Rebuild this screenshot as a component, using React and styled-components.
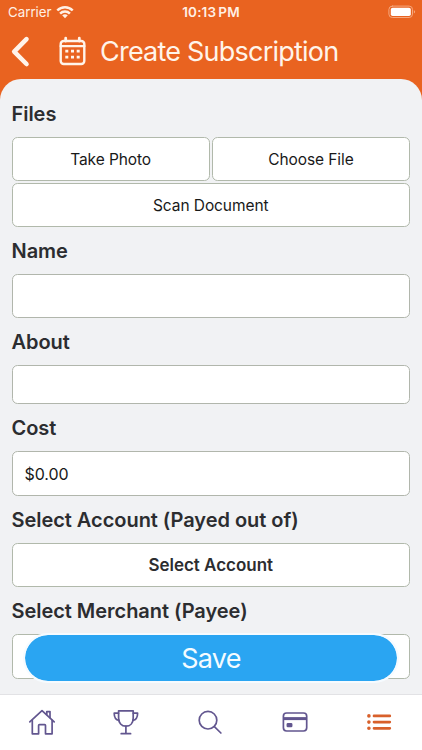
import React from "react";
import styled, { createGlobalStyle } from "styled-components";

const GlobalStyle = createGlobalStyle`
  * { box-sizing: border-box; }
  body { margin: 0; background: #e96320; font-family: Inter, "Liberation Sans", sans-serif; }
  button, input { font-family: inherit; margin: 0; }
`;

const Screen = styled.div`
  width: 422px;
  height: 750px;
  display: flex;
  flex-direction: column;
  overflow: hidden;
  background: #e96320;
`;

const StatusBar = styled.div`
  height: 24px;
  flex: none;
  display: grid;
  grid-template-columns: 1fr auto 1fr;
  align-items: center;
  padding: 0 6px 0 8px;
  color: #fff0e5;
`;

const Carrier = styled.div`
  display: flex;
  align-items: center;
  gap: 4px;
  font-size: 13.3px;
`;

const Clock = styled.div`
  font-size: 13.5px;
  font-weight: 600;
  letter-spacing: 0.15px;
  word-spacing: -1.5px;
  transform: translateX(-1px);
`;

const BatterySlot = styled.div`
  display: flex;
  justify-content: flex-end;
`;

const Header = styled.header`
  height: 55px;
  flex: none;
  display: flex;
  align-items: center;
  padding-left: 9.5px;
  color: #fff4ea;
`;

const Title = styled.h1`
  margin: 0 0 0 15.5px;
  font-size: 27px;
  font-weight: 400;
  line-height: 34px;
  letter-spacing: -0.78px;
  white-space: nowrap;
`;

const CalendarSlot = styled.div`
  display: flex;
  margin-left: 29px;
`;

const Sheet = styled.main`
  position: relative;
  flex: 1;
  min-height: 0;
  padding: 11px 12px 0 11.5px;
  background: #f1f2f4;
  border-radius: 21px 21px 0 0;
`;

const Label = styled.label`
  display: flex;
  align-items: center;
  height: 47px;
  padding-top: 1px;
  color: #2c2d30;
  font-size: 20px;
  font-weight: 600;
  letter-spacing: -0.04px;
  white-space: nowrap;
`;

const FileGrid = styled.div`
  display: grid;
  grid-template-columns: 1fr 1fr;
  gap: 2px;
`;

const FormButton = styled.button`
  display: flex;
  align-items: center;
  justify-content: center;
  width: 100%;
  height: ${(p) => p.$height || "44.5px"};
  grid-column: ${(p) => (p.$wide ? "1 / -1" : "auto")};
  padding: ${(p) => (p.$wide ? "1px 0 0" : "0")};
  border: 1px solid #b1b9ab;
  border-radius: 5.5px;
  background: #fff;
  color: ${(p) => (p.$strong ? "#2c2d30" : "#191919")};
  font-size: ${(p) => (p.$strong ? "17px" : "15.5px")};
  font-weight: ${(p) => (p.$strong ? 600 : 400)};
  letter-spacing: ${(p) => (p.$strong ? "-0.02px" : "-0.08px")};
`;

const Field = styled.input`
  display: block;
  width: 100%;
  height: ${(p) => p.$height || "44.5px"};
  padding: 1px 12px 0;
  border: 1px solid #b1b6ac;
  border-radius: 5.5px;
  background: #fff;
  color: #191919;
  font-size: 16px;
  letter-spacing: -0.05px;
  outline: none;
`;

const SaveButton = styled.button`
  position: absolute;
  left: 23px;
  right: 23px;
  bottom: 11px;
  height: 50px;
  padding: 0;
  border: 2px solid #f6fbff;
  border-radius: 25px;
  background: #2aa5f2;
  background-clip: padding-box;
  color: #f4fbff;
  font-size: 27px;
  letter-spacing: -0.7px;
`;

const TabBar = styled.nav`
  height: 56px;
  flex: none;
  display: grid;
  grid-template-columns: repeat(5, 1fr);
  border-top: 1px solid #e2e2e5;
  background: #fff;
`;

const Tab = styled.a`
  display: flex;
  justify-content: center;
  padding: 13px 1.4px 0 0;
  color: ${(p) => (p.$active ? "#d8602b" : "#62568f")};
`;

const Icon = styled.svg.attrs({ fill: "none", stroke: "currentColor", strokeLinecap: "round", strokeLinejoin: "round" })`
  display: block;
  flex: none;
  overflow: visible;
`;

const Wifi = () => (
  <Icon width="18" height="13" viewBox="0 0 18 13" strokeWidth="2.5">
    <path d="M1.3 4.5C5.5 .1 12.5 .1 16.7 4.5" strokeLinecap="butt" />
    <path d="M4.1 7.6C6.8 4.8 11.2 4.8 13.9 7.6" strokeLinecap="butt" />
    <path d="M6.2 9.3Q9 7.1 11.8 9.3L9 12.2Z" fill="currentColor" stroke="none" />
  </Icon>
);

const Battery = () => (
  <Icon width="28" height="13" viewBox="0 0 28 13">
    <rect x=".9" y=".1" width="23.6" height="11.4" rx="3.4" stroke="#f6a77d" strokeWidth="1" />
    <rect x="2.8" y="1.8" width="20" height="8.3" rx="1.8" fill="#fff" stroke="none" />
    <path d="M25.9 4Q28.4 5.8 25.9 7.6Z" fill="#f6a77d" stroke="none" />
  </Icon>
);

const Back = () => (
  <Icon width="20" height="32" viewBox="0 0 20 32" strokeWidth="4.6">
    <path d="M16.5 3.1L4.2 15.6L16.5 28" />
  </Icon>
);

const Calendar = () => (
  <Icon width="26" height="29" viewBox="0 0 26 29" strokeWidth="2.4">
    <rect x="1.7" y="4" width="23.6" height="23" rx="3" />
    <path d="M1.7 9.1H25.3" />
    <path d="M6.7 1.2V4M20.3 1.2V4" strokeWidth="2.8" />
    <path
      d="M6.3 12.7h3v2.7h-3zM12 12.7h3v2.7h-3zM17.7 12.7h3v2.7h-3zM6.3 18.7h3v2.7h-3zM12 18.7h3v2.7h-3zM17.7 18.7h3v2.7h-3z"
      fill="currentColor"
      stroke="none"
    />
  </Icon>
);

const Home = () => (
  <Icon width="28" height="28" viewBox="0 0 28 28" strokeWidth="1.7">
    <path d="M1.8 13.9L14 2.7L26.2 13.9" />
    <path d="M4.3 12.3V25.8H10.6V17.5Q10.6 16.7 11.4 16.7H16.7Q17.5 16.7 17.5 17.5V25.8H24.1V12.3" />
    <path d="M18.8 6.3V3.6H22V9.4" />
  </Icon>
);

const Trophy = () => (
  <Icon width="28" height="28" viewBox="0 0 28 28" strokeWidth="1.7">
    <path d="M6.6 2.8H21.2V10C21.2 15 18.3 18.2 13.9 18.2S6.6 15 6.6 10Z" />
    <path d="M6.5 5.2H2.2C2.2 9.2 4 11.9 7 12.4M21.3 5.2H25.6C25.6 9.2 23.8 11.9 20.8 12.4M13.9 18.2V25.6M9.2 25.7H18.6" />
  </Icon>
);

const Search = () => (
  <Icon width="28" height="28" viewBox="0 0 28 28" strokeWidth="1.7">
    <circle cx="12" cy="12.2" r="8.8" />
    <path d="M18.4 18.6L24.9 25" />
  </Icon>
);

const Card = () => (
  <Icon width="28" height="28" viewBox="0 0 28 28" strokeWidth="1.7">
    <rect x="2.4" y="5" width="23.3" height="18" rx="3.2" />
    <path d="M2.4 10.6H25.7" strokeWidth="3" strokeLinecap="butt" />
    <rect x="6.4" y="15.8" width="4.2" height="2.6" rx=".5" fill="currentColor" />
  </Icon>
);

const List = () => (
  <Icon width="28" height="28" viewBox="0 0 28 28" strokeWidth="2.7">
    <path d="M9 7.9H24.8M9 14.1H24.8M9 20.3H24.8" />
    <path d="M3.9 7.9h.01M3.9 14.1h.01M3.9 20.3h.01" strokeWidth="3.6" />
  </Icon>
);

const tabs = [
  { name: "Home", Glyph: Home },
  { name: "Goals", Glyph: Trophy },
  { name: "Search", Glyph: Search },
  { name: "Cards", Glyph: Card },
  { name: "Menu", Glyph: List, active: true },
];

export default function App() {
  return (
    <Screen>
      <GlobalStyle />
      <StatusBar>
        <Carrier>Carrier <Wifi /></Carrier>
        <Clock>10:13 PM</Clock>
        <BatterySlot><Battery /></BatterySlot>
      </StatusBar>
      <Header>
        <Back />
        <CalendarSlot><Calendar /></CalendarSlot>
        <Title>Create Subscription</Title>
      </Header>
      <Sheet>
        <Label as="div">Files</Label>
        <FileGrid>
          <FormButton $height="44px">Take Photo</FormButton>
          <FormButton $height="44px">Choose File</FormButton>
          <FormButton $height="43.5px" $wide>Scan Document</FormButton>
        </FileGrid>
        <Label htmlFor="name">Name</Label>
        <Field id="name" />
        <Label htmlFor="about">About</Label>
        <Field id="about" $height="39px" />
        <Label htmlFor="cost">Cost</Label>
        <Field id="cost" defaultValue="$0.00" />
        <Label as="div">Select Account (Payed out of)</Label>
        <FormButton $strong>Select Account</FormButton>
        <Label as="div">Select Merchant (Payee)</Label>
        <FormButton />
        <SaveButton>Save</SaveButton>
      </Sheet>
      <TabBar>
        {tabs.map(({ name, Glyph, active }) => (
          <Tab key={name} $active={active}><Glyph /></Tab>
        ))}
      </TabBar>
    </Screen>
  );
}
